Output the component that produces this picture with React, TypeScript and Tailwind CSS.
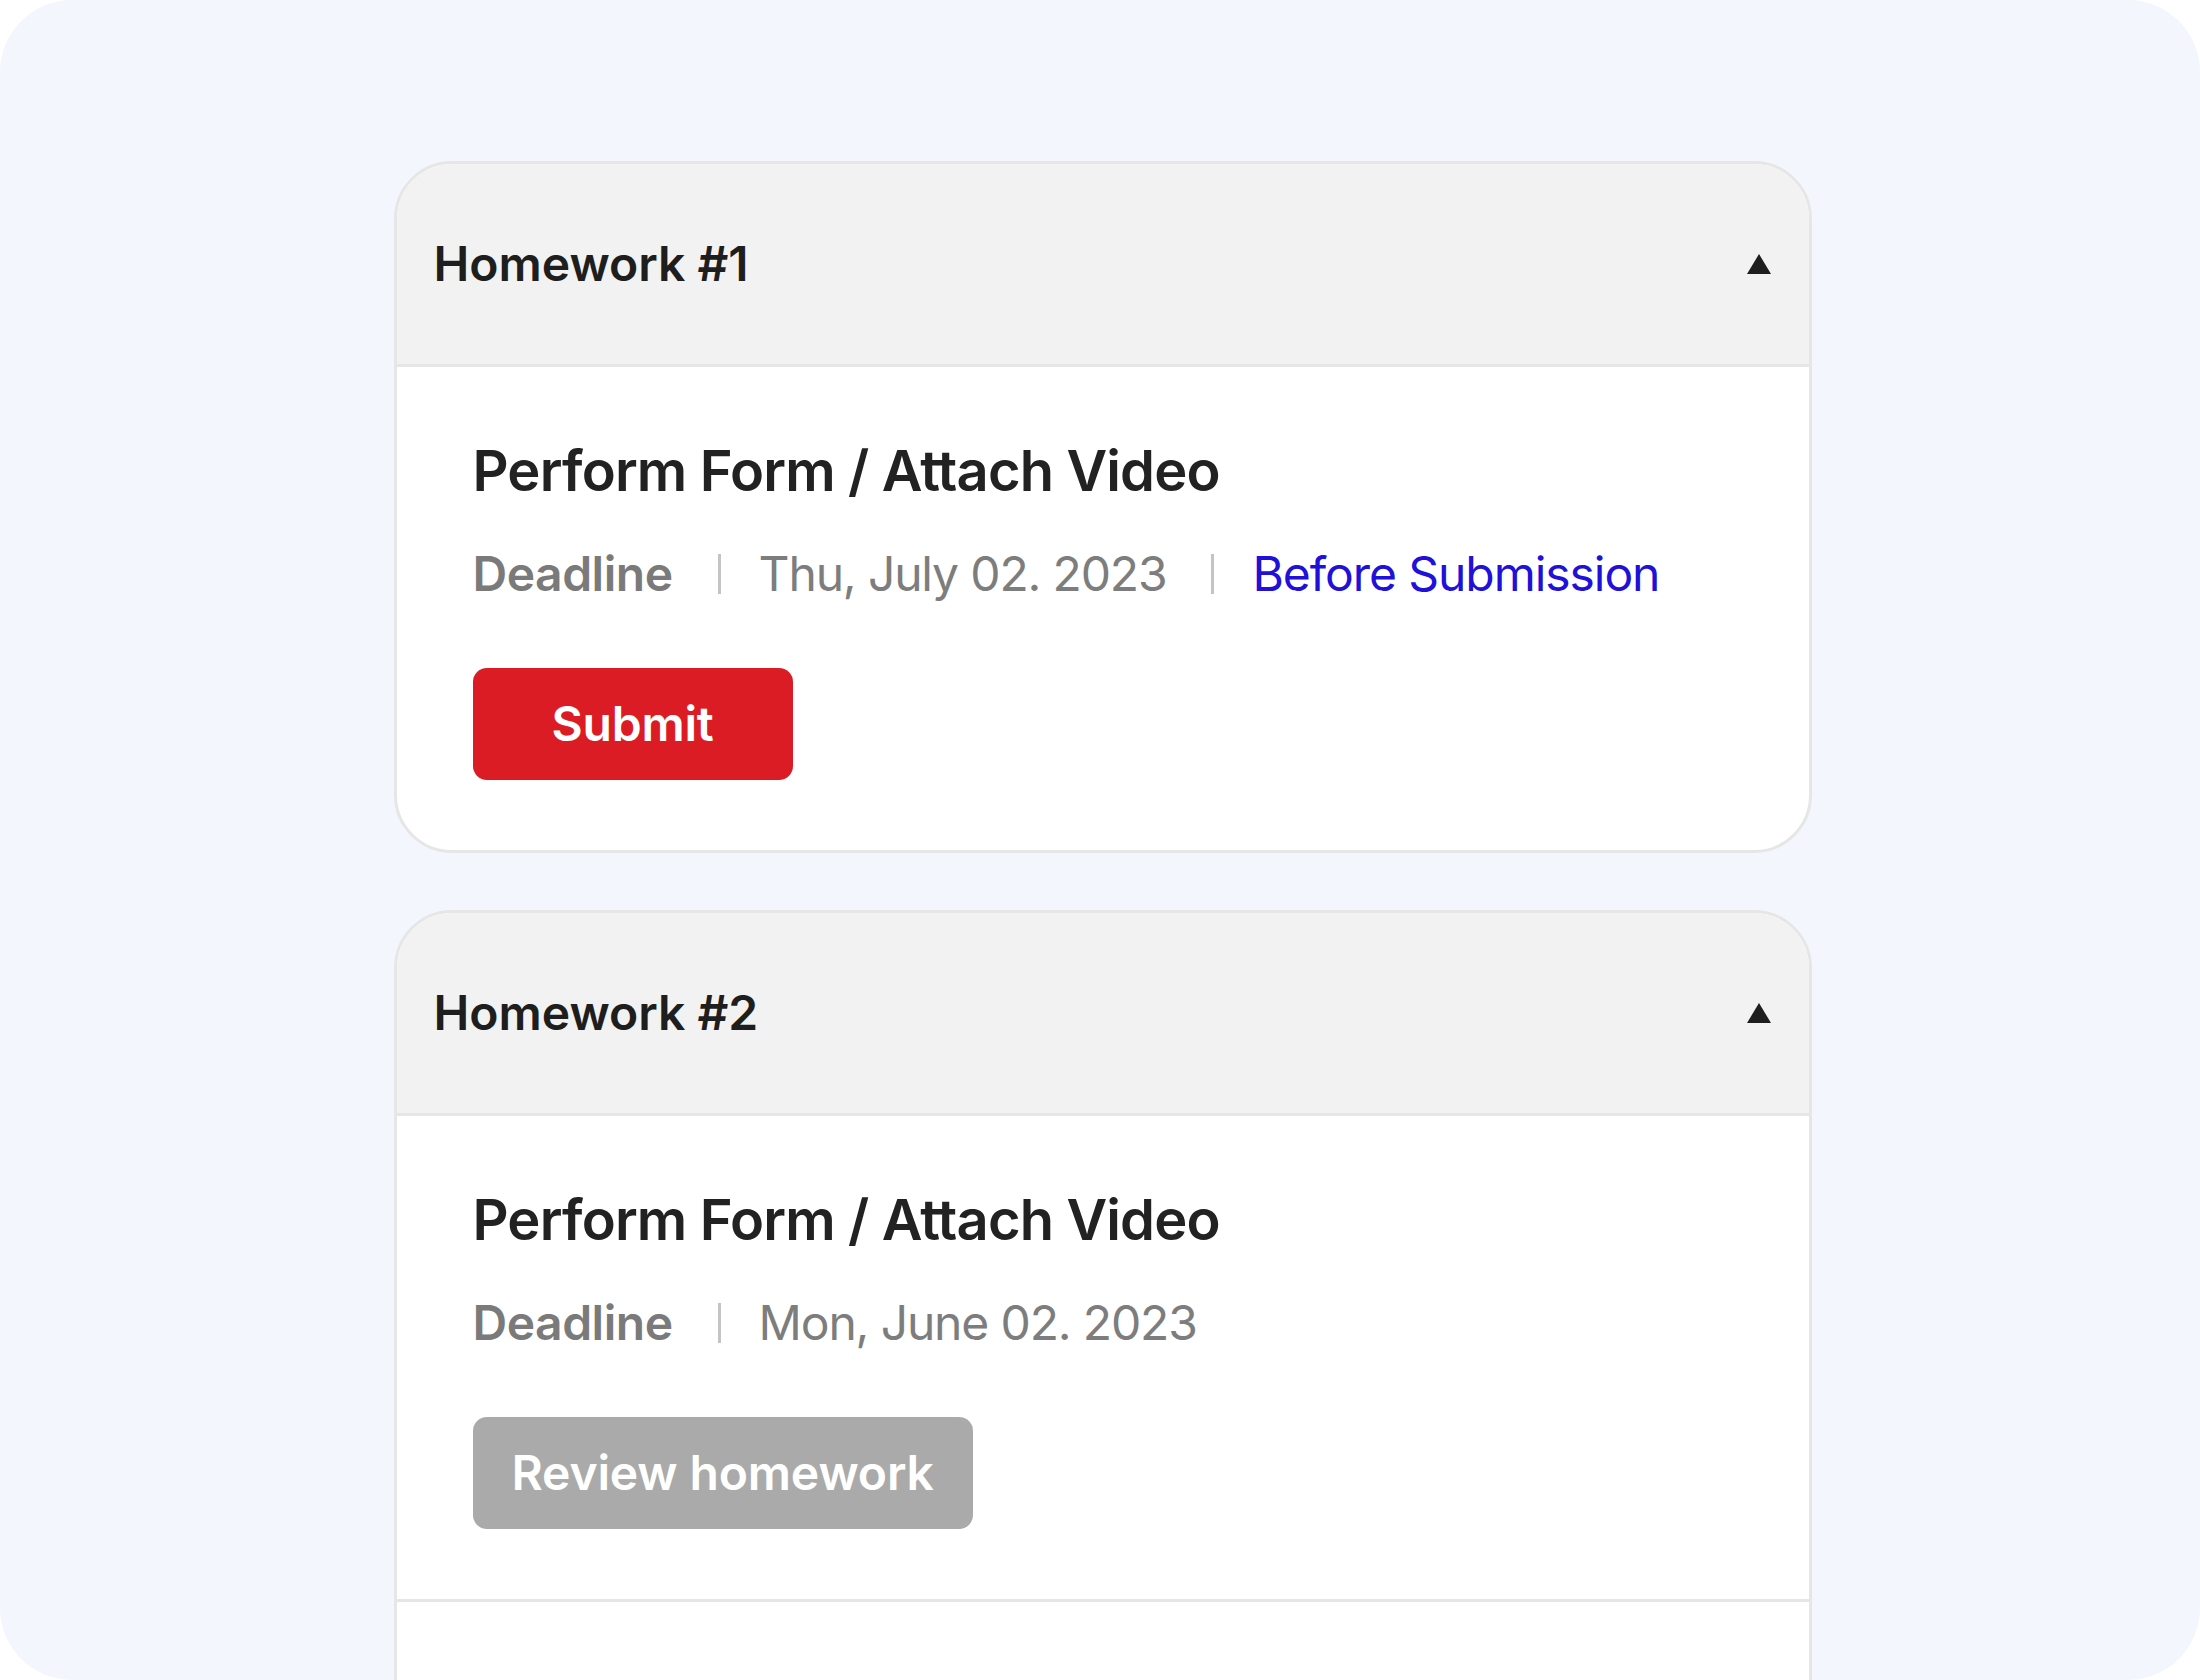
import React from 'react';

type Item = {
  title: string;
  date: string;
  status?: string;
  action: 'submit' | 'review';
};

const homeworks: { name: string; items: Item[]; more?: boolean }[] = [
  {
    name: 'Homework #1',
    items: [
      { title: 'Perform Form / Attach Video', date: 'Thu, July 02. 2023', status: 'Before Submission', action: 'submit' }
    ]
  },
  {
    name: 'Homework #2',
    items: [
      { title: 'Perform Form / Attach Video', date: 'Mon, June 02. 2023', action: 'review' }
    ],
    more: true
  }
];

const Divider = () => <span className="ml-[45px] mr-[38px] inline-block h-[40px] w-[3px] bg-[#c4c4c4]" />;

const HomeworkItem: React.FC<{ item: Item }> = ({ item }) => (
  <div className="pt-[70px] pb-[70px] pl-[76px] pr-[40px]">
    <h3 className="text-[56px] font-semibold leading-[68px] tracking-[-0.015em] text-[#222222]">{item.title}</h3>

    <div className="mt-[40px] flex items-center text-[48px] leading-[58px]">
      <span className="font-semibold tracking-[-0.01em] text-[#7a7a7a]">Deadline</span>
      <Divider />
      <span className="tracking-[-0.024em] text-[#7d7d7d]">{item.date}</span>
      {item.status && (
        <>
          <Divider />
          <span className="tracking-[-0.022em] text-[#2010d8]">{item.status}</span>
        </>
      )}
    </div>

    {item.action === 'submit' ? (
      <button className="mt-[65px] h-[112px] min-w-[320px] rounded-[14px] bg-[#dc1c24] px-[39px] text-[48px] font-semibold tracking-[-0.005em] text-white">
        Submit
      </button>
    ) : (
      <button className="mt-[65px] h-[112px] min-w-[320px] rounded-[14px] bg-[#aaaaaa] px-[39px] text-[48px] font-semibold tracking-[-0.003em] text-white">
        Review homework
      </button>
    )}
  </div>
);

export default function App() {
  return (
    <div className="min-h-screen bg-white font-['Inter','Noto_Sans',sans-serif]">
      <div className="h-[1680px] overflow-hidden rounded-[72px] bg-[#f3f6fd] pt-[161px] pl-[5px]">
        <div className="mx-auto flex w-[1418px] flex-col gap-[57px]">
          {homeworks.map((hw) => (
            <div key={hw.name} className="overflow-hidden rounded-[58px] border-[3px] border-[#e6e6e6] bg-white">
              {/* Header */}
              <div className="flex h-[203px] items-center justify-between border-b-[3px] border-[#e6e6e6] bg-[#f2f2f2] pl-[37px] pr-[38px]">
                <span className="text-[48px] font-semibold leading-[58px] tracking-[0em] text-[#1e1e1e]">{hw.name}</span>
                <svg width="24" height="20" viewBox="0 0 24 20">
                  <path d="M12 0 L24 20 L0 20 Z" fill="#1e1e1e" />
                </svg>
              </div>

              {/* Items */}
              {hw.items.map((item, i) => (
                <HomeworkItem key={i} item={item} />
              ))}

              {/* Next item, below the fold */}
              {hw.more && <div className="h-[200px] border-t-[3px] border-[#e6e6e6]" />}
            </div>
          ))}
        </div>
      </div>
    </div>
  );
}
